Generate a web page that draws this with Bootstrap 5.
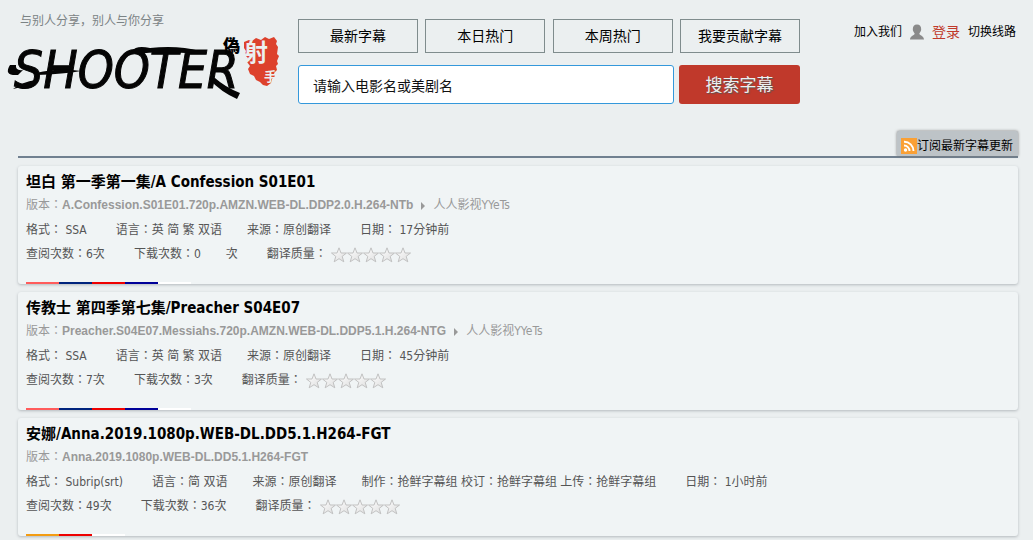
<!DOCTYPE html>
<html lang="zh">
<head>
<meta charset="utf-8">
<meta name="viewport" content="width=device-width, initial-scale=1">
<title>射手网</title>
<link href="https://cdn.jsdelivr.net/npm/bootstrap@5.3.0/dist/css/bootstrap.min.css" rel="stylesheet">
<style>
body{background:#ebeff0;color:#000;font:12px/24px "Noto Sans","Noto Sans CJK SC",sans-serif}
a{color:inherit;text-decoration:none}
.brand-col{width:298px;padding-left:8px}
.slogan{color:#7b8385;padding-left:12px;height:20px;line-height:18px}
.logo{display:block;width:274px;height:68px;overflow:visible}
.search-col{width:502px;padding-top:19px}
.nav-box{width:120px;height:34px;border:1px solid #7f8c8d;font-size:14px;line-height:32px;text-align:center}
.search-form{gap:5px}
.search-input{min-width:0;height:39px;border:1px solid #3498db;border-radius:3px;padding:2px 14px 0;font-size:14px;color:#000;background:#fff}
.search-input::placeholder{color:#111;opacity:1}
.search-btn{width:121px;height:39px;padding:0;border:0;border-radius:3px;background:#c0392b;color:#ecf0f1;font-size:17px;text-shadow:1px 1px 1px #555}
.user-links{padding:20px 17px 0 0}
.login{color:#c0392b;font-size:14px}
.main-area{margin:27px 15px 4px 18px}
.rss-bar{border-bottom:2px solid #708090}
.rss-link{height:25px;padding:4px 5px 0 4px;background:#bdc3c7;border-radius:2px 2px 0 0;box-shadow:0 0 3px #777}
.sub-item{height:118px;padding:3px 8px 0;margin-bottom:8px;background:#f0f4f5;border-radius:3px;box-shadow:0 1px 3px #b4babd}
.sub-title{margin:0;height:25px;font-family:"DejaVu Sans Condensed","Noto Sans CJK SC",sans-serif;font-size:15px;font-weight:700;line-height:27px}
.version{height:23px;line-height:22px;color:#999}
.version b{font-family:"Liberation Sans",sans-serif}
.facts{height:25px;line-height:27px;color:#555}
.version,.facts{font-family:"DejaVu Sans Condensed","Noto Sans CJK TC",sans-serif;font-feature-settings:"locl" 0}
.gap-wide{margin-right:29px}
.gap-mid{margin-right:25px}
.stars{width:80px;height:16px;margin-left:4px}
.strip i{width:33px;height:2px}
.c-coral{background:#ff5c5c}
.c-navy{background:#00247d}
.c-red{background:#e00}
.c-blue{background:#009}
.c-orange{background:#f39c12}
</style>
</head>
<body>
<svg width="0" height="0" class="position-absolute" aria-hidden="true">
<defs>
<linearGradient id="starfill" x1="0" y1="0" x2="1" y2="1"><stop offset="0" stop-color="#fff"/><stop offset="1" stop-color="#ddd"/></linearGradient>
<path id="star" d="M8 .8 10 6h5.500l-4.300 3.400 1.600 5.400L8 11.700l-4.800 3.100 1.600-5.400L.5 6H6z" fill="url(#starfill)" stroke="#bcbcbc" stroke-width=".9"/>
<g id="five"><use href="#star"/><use href="#star" x="16"/><use href="#star" x="32"/><use href="#star" x="48"/><use href="#star" x="64"/></g>
</defs>
</svg>
<header class="d-flex">
<div class="brand-col flex-shrink-0 pt-2">
<div class="slogan mt-1 pb-1">与别人分享，别人与你分享</div>
<a href="#"><svg class="logo" viewBox="0 0 274 68" role="img" aria-label="Shooter">
<g fill="#050505">
<text x="6" y="56" font-family="DejaVu Sans Condensed,sans-serif" font-style="italic" font-size="51" stroke="#050505" stroke-width="1">SHOOTER</text>
<path d="M2 33Q-5 44 10 43L15 38Q7 39 8 33ZM5 57Q14 50 28 48L24 54Q14 54 5 57ZM28 41Q52 35 73 39Q56 42 28 43ZM124 19Q128 13 142 16Q170 13 192 19L178 21Q150 19 127 22ZM207 46Q217 55 232 61L229 67Q213 60 201 47Z"/>
</g>
<text x="215" y="20" font-family="Noto Sans CJK TC,sans-serif" font-weight="900" font-size="17">偽</text>
<path d="m236 10 5-2 3 1 4-3 5 2 4-3 4 2 5-2 3 4-1 3 2 3-1 7 2 2-2 5 1 3-2 2 1 4-3 3 1 3-3 3-1 4-4 3-4-1-3-3-4-2-2-4-4-2-2-5 2-3-3-4 1-4-3-3 1-4-2-3z" fill="#dd412c"/>
<g fill="#ebeff0" font-family="Noto Sans CJK SC,sans-serif" font-weight="700"><text x="236" y="29" font-size="24">射</text><text x="256" y="49" font-size="13">手</text></g>
</svg></a>
</div>
<div class="search-col flex-shrink-0">
<nav class="d-flex justify-content-between">
<a class="nav-box" href="#">最新字幕</a><a class="nav-box" href="#">本日热门</a><a class="nav-box" href="#">本周热门</a><a class="nav-box" href="#">我要贡献字幕</a>
</nav>
<form class="search-form d-flex mt-2 pt-1">
<input class="search-input flex-grow-1" type="text" aria-label="搜索" placeholder="请输入电影名或美剧名">
<button class="search-btn" type="button">搜索字幕</button>
</form>
</div>
<div class="user-links d-flex align-items-center justify-content-end flex-grow-1 align-self-start">
<a href="#">加入我们</a>
<svg class="ms-2 me-2" width="14" height="16" viewBox="0 0 15 16" aria-hidden="true"><path d="M7.500 0C10.500 0 12 2 12 5c0 2-1 3-2 4.500 0 2.500 5 2 5 6.500H0c0-4.500 5-4 5-6.500C4 8 3 7 3 5c0-3 1.500-5 4.500-5z" fill="#8a8a8a"/></svg>
<a class="login me-2" href="#">登录</a>
<a href="#">切换线路</a>
</div>
</header>
<main class="main-area">
<div class="rss-bar d-flex justify-content-end mb-2">
<a class="rss-link d-flex align-items-center" href="#"><svg width="16" height="16" viewBox="0 0 16 16" aria-hidden="true"><path fill="#faa035" d="M0 0h16v16H0z"/><circle cx="4.500" cy="12" r="1.700" fill="#fff"/><path d="M3 7.500a5.500 5.500 0 0 1 5.500 5.500M3 3.800A9.200 9.200 0 0 1 12.500 13" fill="none" stroke="#fff" stroke-width="1.900"/></svg>订阅最新字幕更新</a>
</div>
<article class="sub-item d-flex flex-column">
<h2 class="sub-title"><a href="#">坦白 第一季第一集/A Confession S01E01</a></h2>
<div class="version">版本：<b>A.Confession.S01E01.720p.AMZN.WEB-DL.DDP2.0.H.264-NTb</b><svg class="mx-2" width="4" height="8" viewBox="0 0 4 8" aria-hidden="true"><path d="m0 0 4 4-4 4z" fill="#999"/></svg>人人影视YYeTs</div>
<div class="facts d-flex"><span class="gap-wide">格式： SSA</span><span class="gap-mid">语言：英 简 繁 双语</span><span class="gap-wide">来源：原创翻译</span><span>日期： 17分钟前</span></div>
<div class="facts d-flex align-items-center"><span class="gap-wide">查阅次数：6次</span><span class="gap-mid">下载次数：0</span><span class="gap-wide">次</span><span>翻译质量：</span><svg class="stars" role="img" aria-label="0"><use href="#five"/></svg></div>
<div class="strip d-flex mt-auto"><i class="c-coral"></i><i class="c-navy"></i><i class="c-red"></i><i class="c-blue"></i><i class="bg-white"></i></div>
</article>
<article class="sub-item d-flex flex-column">
<h2 class="sub-title"><a href="#">传教士 第四季第七集/Preacher S04E07</a></h2>
<div class="version">版本：<b>Preacher.S04E07.Messiahs.720p.AMZN.WEB-DL.DDP5.1.H.264-NTG</b><svg class="mx-2" width="4" height="8" viewBox="0 0 4 8" aria-hidden="true"><path d="m0 0 4 4-4 4z" fill="#999"/></svg>人人影视YYeTs</div>
<div class="facts d-flex"><span class="gap-wide">格式： SSA</span><span class="gap-mid">语言：英 简 繁 双语</span><span class="gap-wide">来源：原创翻译</span><span>日期： 45分钟前</span></div>
<div class="facts d-flex align-items-center"><span class="gap-wide">查阅次数：7次</span><span class="gap-wide">下载次数：3次</span><span>翻译质量：</span><svg class="stars" role="img" aria-label="0"><use href="#five"/></svg></div>
<div class="strip d-flex mt-auto"><i class="c-coral"></i><i class="c-navy"></i><i class="c-red"></i><i class="c-blue"></i><i class="bg-white"></i></div>
</article>
<article class="sub-item d-flex flex-column mb-0">
<h2 class="sub-title"><a href="#">安娜/Anna.2019.1080p.WEB-DL.DD5.1.H264-FGT</a></h2>
<div class="version">版本：<b>Anna.2019.1080p.WEB-DL.DD5.1.H264-FGT</b></div>
<div class="facts d-flex"><span class="gap-wide">格式： Subrip(srt)</span><span class="gap-mid">语言：简 双语</span><span class="gap-mid">来源：原创翻译</span><span class="gap-wide">制作：抢鲜字幕组 校订：抢鲜字幕组 上传：抢鲜字幕组</span><span>日期： 1小时前</span></div>
<div class="facts d-flex align-items-center"><span class="gap-wide">查阅次数：49次</span><span class="gap-wide">下载次数：36次</span><span>翻译质量：</span><svg class="stars" role="img" aria-label="0"><use href="#five"/></svg></div>
<div class="strip d-flex mt-auto"><i class="c-orange"></i><i class="c-red"></i><i class="bg-white"></i></div>
</article>
</main>
<script src="https://cdn.jsdelivr.net/npm/bootstrap@5.3.0/dist/js/bootstrap.bundle.min.js"></script>
</body>
</html>
